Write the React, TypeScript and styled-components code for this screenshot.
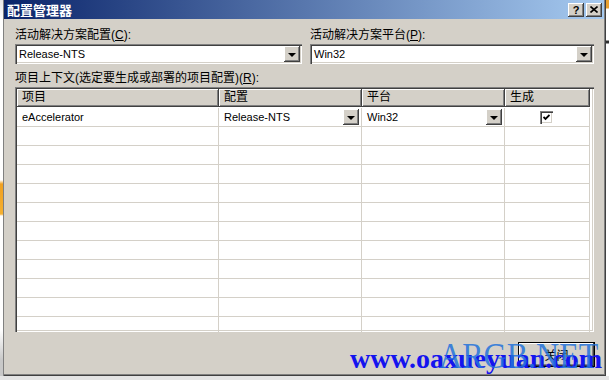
import React from 'react'
import styled, { createGlobalStyle } from 'styled-components'

const GlobalStyle = createGlobalStyle`
  html, body {
    margin: 0;
    padding: 0;
    background: #ffffff;
  }
  body {
    font-family: 'Liberation Sans', 'Noto Sans CJK SC', sans-serif;
    font-size: 12px;
    color: #000;
  }
`

const Screen = styled.div`
  position: relative;
  width: 609px;
  height: 380px;
  overflow: hidden;
  display: flex;
  flex-direction: column;
  background: #ffffff;
`

const Middle = styled.div`
  display: flex;
  height: 376px;
`

const Edge = styled.div<{ $side: 'left' | 'right' }>`
  width: 3px;
  background: ${(p) =>
    p.$side === 'left'
      ? 'linear-gradient(#e6e6e6 0, #ffffff 20px, #ffffff 180px, #f0a020 184px, #f5b030 214px, #ffffff 216px, #ffffff 330px, #c8c8c8 360px)'
      : 'linear-gradient(#e8a030 0, #e8a030 8px, #ffffff 9px, #ffffff 40px, #303030 41px, #303030 43px, #ffffff 44px)'};
`

const BottomStrip = styled.div`
  height: 4px;
  background: #e4e4e4;
`

const Dialog = styled.div`
  width: 603px;
  background: #d4d0c8;
  display: flex;
  flex-direction: column;
  box-shadow: inset 1px 0 #808080, inset -1px -1px #404040, inset -2px -2px #808080;
`

const TitleBar = styled.div`
  height: 19px;
  margin: 0 2px 0 1px;
  display: flex;
  align-items: center;
  padding: 0 2px 0 3px;
  background: linear-gradient(90deg, #0a246a 0%, #a6caf0 100%);
`

const Title = styled.div`
  flex: 1;
  color: #ffffff;
  font-weight: bold;
  font-size: 13px;
  font-family: 'Noto Sans CJK SC', sans-serif;
  line-height: 15px;
`

const CaptionButton = styled.div`
  width: 16px;
  height: 14px;
  margin-left: 2px;
  background: #d4d0c8;
  box-shadow: inset -1px -1px #404040, inset 1px 1px #ffffff, inset -2px -2px #808080;
  display: flex;
  align-items: center;
  justify-content: center;
  font-family: 'Liberation Sans', sans-serif;
  font-weight: bold;
  font-size: 11px;
  line-height: 12px;
  color: #000;
`

const Body = styled.div`
  flex: 1;
  display: flex;
  flex-direction: column;
  padding: 0 12px;
`

const TopRow = styled.div`
  display: grid;
  grid-template-columns: 287px 1fr;
  column-gap: 8px;
  margin-top: 9px;
`

const Field = styled.div`
  display: flex;
  flex-direction: column;
  gap: 2px;
`

const Label = styled.div`
  font-size: 12px;
  line-height: 14px;
  white-space: nowrap;
  u {
    text-decoration: underline;
  }
`

const Combo = styled.div`
  height: 20px;
  box-sizing: border-box;
  background: #ffffff;
  display: flex;
  align-items: center;
  padding: 2px;
  box-shadow: inset 1px 1px #808080, inset 2px 2px #404040, inset -1px -1px #ffffff, inset -2px -2px #d4d0c8;
`

const ComboText = styled.div`
  flex: 1;
  padding-left: 2px;
  font-size: 11px;
  line-height: 14px;
`

const DropButton = styled.div`
  width: 16px;
  height: 16px;
  box-sizing: border-box;
  background: #d4d0c8;
  box-shadow: inset -1px -1px #404040, inset 1px 1px #ffffff, inset -2px -2px #808080;
  display: flex;
  align-items: center;
  justify-content: center;
  &::after {
    content: '';
    width: 0;
    height: 0;
    margin-top: 1px;
    border-left: 4px solid transparent;
    border-right: 4px solid transparent;
    border-top: 4px solid #000;
  }
`

const ContextLabel = styled(Label)`
  margin-top: 7px;
`

const GridFrame = styled.div`
  margin-top: 2px;
  height: 245px;
  box-sizing: border-box;
  padding: 2px;
  background: #ffffff;
  overflow: hidden;
  box-shadow: inset 1px 1px #808080, inset 2px 2px #404040, inset -1px -1px #ffffff, inset -2px -2px #d4d0c8;
`

const Table = styled.div`
  display: grid;
  grid-template-columns: 202px 143px 143px 85px;
  grid-auto-rows: 19px;
`

const HeaderCell = styled.div`
  height: 18px;
  box-sizing: border-box;
  background: #d4d0c8;
  padding-left: 5px;
  font-size: 12px;
  line-height: 17px;
  box-shadow: inset -1px -1px #404040, inset 1px 1px #ffffff, inset -2px -2px #808080;
`

const Cell = styled.div<{ $center?: boolean }>`
  box-sizing: border-box;
  border-right: 1px solid #d4d0c8;
  border-bottom: 1px solid #d4d0c8;
  display: flex;
  align-items: center;
  justify-content: ${(p) => (p.$center ? 'center' : 'flex-start')};
  padding-left: ${(p) => (p.$center ? '0' : '5px')};
  padding-right: 2px;
  font-size: 11px;
`

const CellText = styled.div`
  flex: 1;
  line-height: 14px;
`

const CheckBox = styled.div`
  width: 13px;
  height: 13px;
  box-sizing: border-box;
  background: #ffffff;
  box-shadow: inset 1px 1px #808080, inset 2px 2px #404040, inset -1px -1px #ffffff, inset -2px -2px #d4d0c8;
  display: flex;
  align-items: center;
  justify-content: center;
`

const ButtonRow = styled.div`
  display: flex;
  justify-content: flex-end;
  margin-top: 11px;
`

const PushButton = styled.div`
  width: 75px;
  height: 23px;
  box-sizing: border-box;
  background: #d4d0c8;
  display: flex;
  align-items: center;
  justify-content: center;
  font-size: 12px;
  box-shadow: 0 0 0 1px #000, inset -1px -1px #404040, inset 1px 1px #ffffff, inset -2px -2px #808080;
`

const Watermark = styled.div`
  position: absolute;
  left: 350px;
  top: 344px;
  font-family: 'Liberation Serif', serif;
  font-weight: bold;
  font-size: 28px;
  line-height: 30px;
  color: #1414ee;
  white-space: nowrap;
`

const WatermarkBrand = styled.div`
  position: absolute;
  left: 439px;
  top: 336px;
  font-family: 'Liberation Serif', serif;
  font-size: 36px;
  line-height: 40px;
  color: rgba(35, 115, 220, 0.85);
  white-space: nowrap;
  transform: scaleX(0.89);
  transform-origin: left center;
`

const rows = Array.from({ length: 12 }, (_, i) => i)

export default function App() {
  return (
    <Screen>
      <GlobalStyle />
      <Middle>
        <Edge $side="left" />
        <Dialog>
          <TitleBar>
            <Title>配置管理器</Title>
            <CaptionButton>?</CaptionButton>
            <CaptionButton>
              <svg width="8" height="7" viewBox="0 0 8 7">
                <path d="M0.5 0.5 L7.5 6.5 M7.5 0.5 L0.5 6.5" stroke="#000" strokeWidth="1.6" />
              </svg>
            </CaptionButton>
          </TitleBar>
          <Body>
            <TopRow>
              <Field>
                <Label>
                  活动解决方案配置(<u>C</u>):
                </Label>
                <Combo>
                  <ComboText>Release-NTS</ComboText>
                  <DropButton />
                </Combo>
              </Field>
              <Field>
                <Label>
                  活动解决方案平台(<u>P</u>):
                </Label>
                <Combo>
                  <ComboText>Win32</ComboText>
                  <DropButton />
                </Combo>
              </Field>
            </TopRow>
            <ContextLabel>
              项目上下文(选定要生成或部署的项目配置)(<u>R</u>):
            </ContextLabel>
            <GridFrame>
              <Table>
                <HeaderCell>项目</HeaderCell>
                <HeaderCell>配置</HeaderCell>
                <HeaderCell>平台</HeaderCell>
                <HeaderCell>生成</HeaderCell>
                <Cell>
                  <CellText>eAccelerator</CellText>
                </Cell>
                <Cell>
                  <CellText>Release-NTS</CellText>
                  <DropButton />
                </Cell>
                <Cell>
                  <CellText>Win32</CellText>
                  <DropButton />
                </Cell>
                <Cell $center>
                  <CheckBox>
                    <svg width="7" height="7" viewBox="0 0 7 7">
                      <path d="M0.5 3 L2.5 5 L6.5 1" stroke="#000" strokeWidth="1.8" fill="none" />
                    </svg>
                  </CheckBox>
                </Cell>
                {rows.map((r) => (
                  <React.Fragment key={r}>
                    <Cell />
                    <Cell />
                    <Cell />
                    <Cell />
                  </React.Fragment>
                ))}
              </Table>
            </GridFrame>
            <ButtonRow>
              <PushButton>关闭</PushButton>
            </ButtonRow>
          </Body>
        </Dialog>
        <Edge $side="right" />
      </Middle>
      <BottomStrip />
      <Watermark>www.oaxueyuan.com</Watermark>
      <WatermarkBrand>ARGB.NET</WatermarkBrand>
    </Screen>
  )
}
